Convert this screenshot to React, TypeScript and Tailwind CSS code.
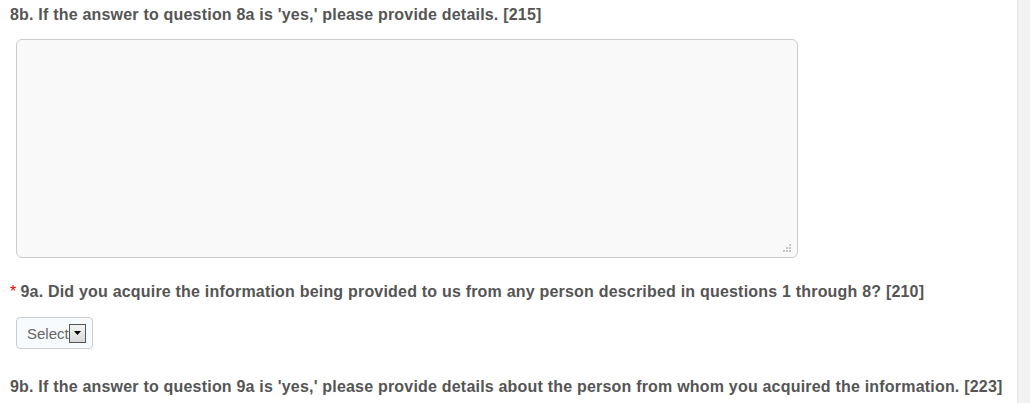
export default function App() {
  return (
    <div className="flex h-[403px] w-[1030px] overflow-hidden bg-white font-['Liberation_Sans',Arial,sans-serif]">
      <main className="flex-1 pl-[10px] pt-[5px]">
        {/* question 8b */}
        <label className="block text-[16px] font-bold leading-[20px] tracking-[0.2px] text-[#555]">
          8b. If the answer to question 8a is 'yes,' please provide details. [215]
        </label>
        <div className="ml-[6px] mt-[14px] relative h-[219px] w-[782px] rounded-[6px] border border-[#ccc] bg-[#f9f9f9]">
          <textarea className="h-full w-full resize-none bg-transparent outline-none" />
          {/* resize grip */}
          <svg className="absolute bottom-[4px] right-[5px]" width="10" height="10" viewBox="0 0 10 10">
            <g fill="#c4c4c4">
              <rect x="7" y="1" width="2" height="2" />
              <rect x="4" y="4" width="2" height="2" />
              <rect x="7" y="4" width="2" height="2" />
              <rect x="1" y="7" width="2" height="2" />
              <rect x="4" y="7" width="2" height="2" />
              <rect x="7" y="7" width="2" height="2" />
            </g>
          </svg>
        </div>

        {/* question 9a */}
        <label className="mt-[24px] block text-[16px] font-bold leading-[20px] tracking-[0.2px] text-[#555]">
          <span className="mr-[4px] font-normal text-[#e00]">*</span>
          9a. Did you acquire the information being provided to us from any person described in questions 1 through 8? [210]
        </label>
        <div className="ml-[6px] mt-[15px] flex h-[32px] w-[77px] items-center rounded-[4px] border border-[#ccc] bg-[#f8fbfd] pl-[10px]">
          <span className="text-[15px] leading-none text-[#666]">Select</span>
          <span className="flex h-[19px] w-[17px] items-center justify-center border border-[#555] bg-[linear-gradient(#f4f4f4,#d8d8d8)]">
            <svg width="7" height="4" viewBox="0 0 7 4">
              <path d="M0 0h7L3.5 4z" fill="#000" />
            </svg>
          </span>
        </div>

        {/* question 9b */}
        <label className="mt-[28px] block text-[16px] font-bold leading-[20px] tracking-[0.2px] text-[#555]">
          9b. If the answer to question 9a is 'yes,' please provide details about the person from whom you acquired the information. [223]
        </label>
      </main>
      <div className="w-[13px] border-l border-[#e6e6e6] bg-[#f1f1f1]" />
    </div>
  );
}
